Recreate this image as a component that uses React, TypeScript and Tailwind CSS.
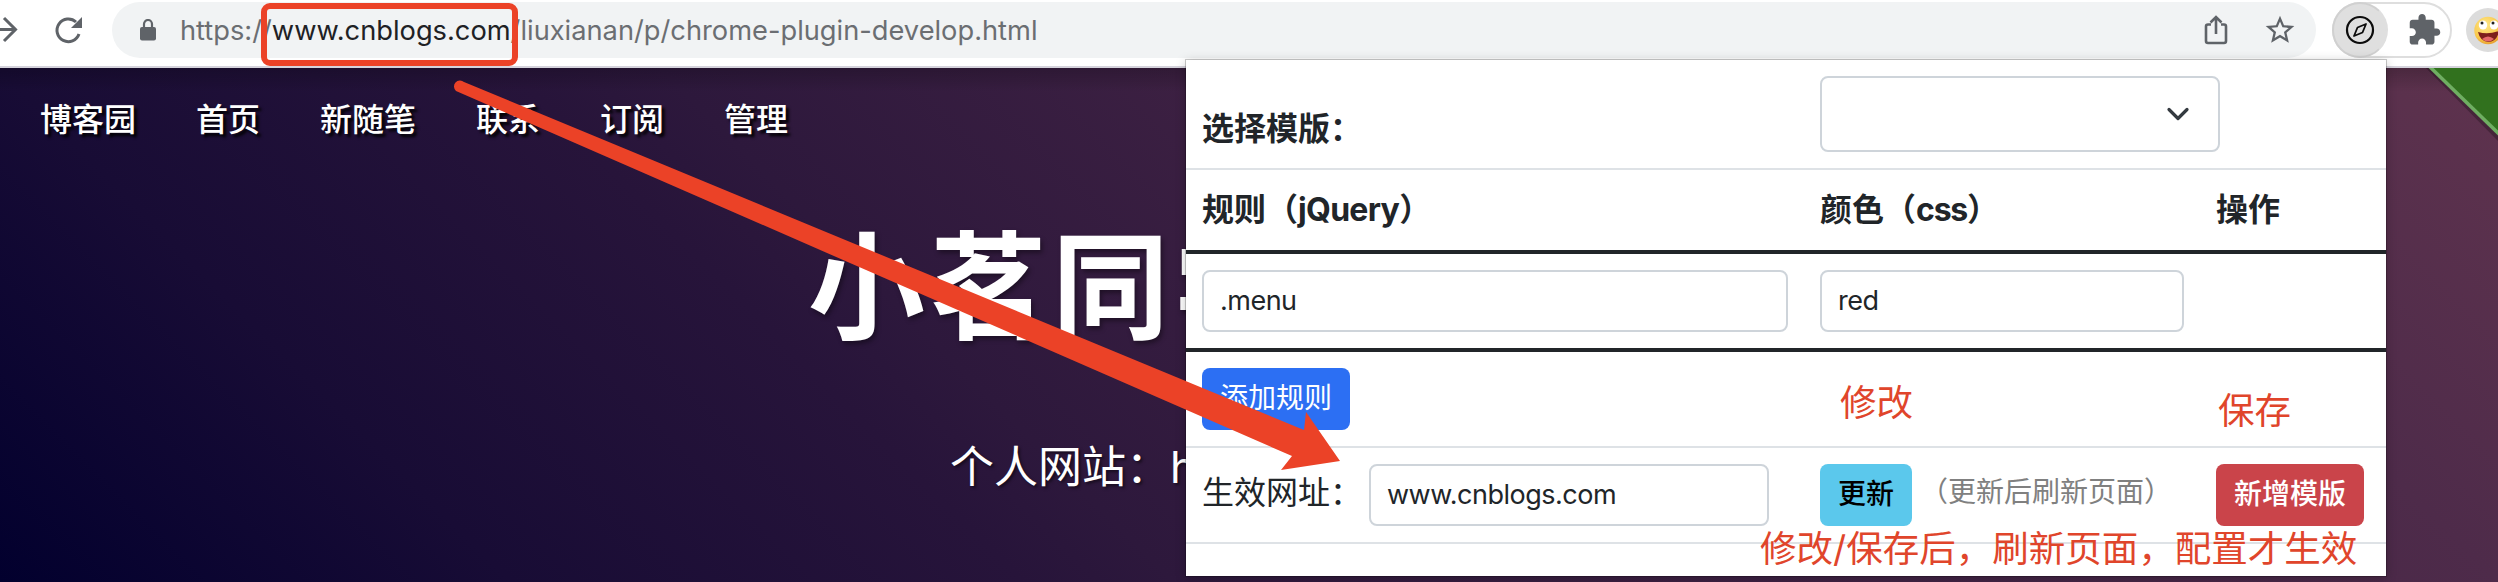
import React from "react";

const CJK = "font-['Inter','Noto_Sans_CJK_SC',sans-serif]";

function Toolbar() {
  return (
    <header className="flex h-[68px] w-full items-start border-b-2 border-[#d5d3dc] bg-white pt-[2px]">
      <div className="flex h-14 w-28 shrink-0 items-center">
        <svg width="112" height="56" viewBox="0 2 112 56" fill="none">
          <path d="M-8 29.500H15M4 18L15.500 29.500L4 41" stroke="#5f6368" strokeWidth="3" />
          <path d="M79 34A11.300 11.300 0 1 1 76 22" stroke="#5f6368" strokeWidth="3" />
          <path d="M82 17V28H71Z" fill="#5f6368" />
        </svg>
      </div>
      <div className="flex h-14 w-[2204px] shrink-0 items-center rounded-full bg-[#f1f3f4]">
        <svg className="ml-7 shrink-0" width="16" height="22" viewBox="0 0 16 22">
          <path d="M2 8h12a2 2 0 0 1 2 2v9.500a2 2 0 0 1-2 2H2a2 2 0 0 1-2-2V10a2 2 0 0 1 2-2Z" fill="#5f6368" />
          <path d="M4 9V5a4 4 0 0 1 8 0v4" fill="none" stroke="#5f6368" strokeWidth="2.200" />
        </svg>
        <div className="ml-6 w-[2024px] pt-[2px] whitespace-nowrap font-['Inter'] text-[27.250px] leading-[54px] text-[#6b6e72]">
          https://<span className="text-[#202124]">www.cnblogs.com</span>/liuxianan/p/chrome-plugin-develop.html
        </div>
        <svg className="shrink-0" width="24" height="30" viewBox="0 0 24 30" fill="none" stroke="#5f6368" strokeWidth="2.600">
          <path d="M7 9.500H4A2 2 0 0 0 2 11.500V26A2 2 0 0 0 4 28H20A2 2 0 0 0 22 26V11.500A2 2 0 0 0 20 9.500H17M12 19V3M6.500 7.500L12 2L17.500 7.500" />
        </svg>
        <svg className="ml-[37px] shrink-0" width="30" height="30" viewBox="1.500 1.500 21 21" fill="#5f6368">
          <path d="M22 9.240l-7.190-.62L12 2 9.190 8.630 2 9.240l5.460 4.730L5.820 21 12 17.270 18.180 21l-1.630-7.030L22 9.240zM12 15.400l-3.760 2.270 1-4.280-3.320-2.880 4.380-.38L12 6.100l1.710 4.040 4.380.38-3.320 2.880 1 4.280L12 15.400z" />
        </svg>
      </div>
      <div className="ml-4 flex h-14 w-[120px] shrink-0 items-center rounded-full border-2 border-[#dedede]">
        <div className="-ml-[2px] flex h-14 w-14 shrink-0 items-center justify-center rounded-full border-2 border-[#d0d0d0] border-r-[#dfdfdf] bg-[#dfdfdf]">
          <svg width="30" height="30" viewBox="0 0 30 30" fill="none" stroke="#0c0c0c" strokeWidth="2.200">
            <circle cx="15" cy="15" r="13" />
            <path d="M21 9L17.500 17.500L9 21L12.500 12.500Z" strokeLinejoin="round" strokeWidth="1.800" />
          </svg>
        </div>
        <svg className="ml-[21px] shrink-0" width="32" height="32" viewBox="1.500 1 22 22" fill="#5f6368">
          <path d="M20.500 11H19V7c0-1.100-.9-2-2-2h-4V3.500C13 2.120 11.880 1 10.500 1S8 2.120 8 3.500V5H4c-1.100 0-1.990.9-1.990 2v3.800H3.500c1.490 0 2.700 1.210 2.700 2.700s-1.210 2.700-2.700 2.700H2V20c0 1.100.9 2 2 2h3.800v-1.500c0-1.490 1.210-2.700 2.700-2.700 1.490 0 2.700 1.210 2.700 2.700V22H17c1.100 0 2-.9 2-2v-4h1.500c1.380 0 2.500-1.120 2.500-2.500S21.880 11 20.500 11z" />
        </svg>
      </div>
      <svg className="mt-[6px] ml-[14px] shrink-0" width="32" height="44" viewBox="0 0 32 44">
        <defs>
          <radialGradient id="face" cx="0.4" cy="0.3" r="0.75">
            <stop offset="0" stopColor="#ffe98a" />
            <stop offset="0.7" stopColor="#f8c648" />
            <stop offset="1" stopColor="#e59a2c" />
          </radialGradient>
        </defs>
        <circle cx="22" cy="22" r="22" fill="#dcdcdc" />
        <circle cx="22" cy="22.500" r="13.700" fill="url(#face)" />
        <ellipse cx="17" cy="17" rx="4.200" ry="4.500" fill="#fff" />
        <ellipse cx="28" cy="17" rx="4.200" ry="4.500" fill="#fff" />
        <circle cx="16" cy="15" r="1.500" fill="#222" />
        <circle cx="27" cy="15" r="1.500" fill="#222" />
        <path d="M12 24Q22 27 33 23Q31 34 22 34Q14 33 12 24Z" fill="#7d1f1c" />
        <path d="M16 31Q22 26 28 31Q22 36 16 31Z" fill="#e56a6a" />
      </svg>
    </header>
  );
}

const NAV = ["博客园", "首页", "新随笔", "联系", "订阅", "管理"];

function BlogPage() {
  return (
    <main className="relative h-[514px] w-full overflow-hidden bg-[linear-gradient(45deg,#02002e_0%,#180c35_17%,#27143a_34%,#2d183c_39%,#3c2042_56%,#4e2b4a_83%,#5f334e_100%)] text-white">
      <div className="absolute inset-x-0 top-0 h-6 bg-linear-to-b from-black/20 to-transparent" />
      <nav className="flex gap-[60px] pt-7 pl-10 text-[32px] leading-[48px] font-medium [text-shadow:3px_3px_3px_#000]">
        {NAV.map((n) => (
          <span key={n}>{n}</span>
        ))}
      </nav>
      <h1 className="mt-[84px] pl-[808px] text-[117px] leading-[120px] font-bold tracking-[5px] whitespace-nowrap [text-shadow:2px_3px_5px_rgba(0,0,0,.4)]">小茗同学</h1>
      <p className="mt-[87px] pl-[950px] text-[44px] leading-[64px] whitespace-nowrap [text-shadow:2px_2px_3px_rgba(0,0,0,.5)]">个人网站：h</p>
      <svg className="absolute top-0 right-0" width="90" height="90" viewBox="0 0 90 90">
        <path d="M19 -4L90 65V73L14 -4Z" fill="#000" opacity=".25" />
        <path d="M23 0L90 65V0Z" fill="#31711e" />
        <path d="M21 -2L92 67" stroke="#6fae62" strokeWidth="3.500" />
      </svg>
    </main>
  );
}

function Field({ value, className }: { value: string; className: string }) {
  return (
    <div className={`h-[62px] shrink-0 rounded-lg border-2 border-[#ced4da] pl-4 text-[27px] leading-[58px] tracking-[-0.5px] ${className}`}>
      {value}
    </div>
  );
}

function Popup() {
  return (
    <section className="absolute top-[60px] left-[1186px] flex h-[516px] w-[1200px] flex-col bg-white text-[32px] leading-[48px] text-[#212529] shadow-[0_0_0_1px_rgba(0,0,0,.2),0_2px_10px_rgba(0,0,0,.25)]">
      <div className="flex h-[110px] shrink-0 items-start border-b-2 border-[#dee2e6] pt-4 pl-4">
        <div className="w-[618px] pt-[29px] font-bold">选择模版：</div>
        <div className="flex h-[76px] w-[400px] items-center justify-end rounded-lg border-2 border-[#ced4da] pr-7">
          <svg width="24" height="16" viewBox="0 0 24 16" fill="none" stroke="#343a40" strokeWidth="3.200" strokeLinecap="round" strokeLinejoin="round">
            <path d="M3 3.500L12 12.500L21 3.500" />
          </svg>
        </div>
      </div>
      <div className="flex h-[84px] shrink-0 items-center border-b-4 border-[#212529] pl-4 font-bold">
        <div className="w-[618px]">规则（<span className="tracking-[-0.7px]">jQuery</span>）</div>
        <div className="w-[396px]">颜色（<span className="tracking-[-1.200px]">css</span>）</div>
        <div>操作</div>
      </div>
      <div className="flex h-[98px] shrink-0 items-start border-b-4 border-[#212529] pt-4 pl-4">
        <Field value=".menu" className="mr-8 w-[586px]" />
        <Field value="red" className="w-[364px]" />
      </div>
      <div className="flex h-24 shrink-0 items-start border-b-2 border-[#dee2e6] pt-4 pl-4">
        <div className="h-[62px] w-[148px] rounded-lg bg-[#2c6ff3] text-center text-[28px] leading-[60px] text-white">添加规则</div>
      </div>
      <div className="flex h-24 shrink-0 items-start border-b-2 border-[#dee2e6] pt-4 pl-4">
        <div className="w-[167px] pt-[5px] whitespace-nowrap">生效网址：</div>
        <Field value="www.cnblogs.com" className="mr-[51px] w-[400px]" />
        <div className="h-[62px] w-[92px] rounded-lg bg-[#5bc8ec] text-center text-[28px] leading-[60px] font-medium text-black">更新</div>
        <div className="w-[304px] pt-[4px] pl-2 text-[28px] whitespace-nowrap text-[#808080]">（更新后刷新页面）</div>
        <div className="h-[62px] w-[148px] rounded-lg bg-[#ca444a] text-center text-[28px] leading-[60px] font-medium text-white">新增模版</div>
      </div>
    </section>
  );
}

function Annotations() {
  return (
    <div className="absolute inset-0 text-[36.500px] leading-[48px] whitespace-nowrap text-[#e0452b]">
      <div className="absolute top-[3px] left-[261px] h-[63px] w-[257px] rounded-[9px] border-[6px] border-[#eb4227]" />
      <svg className="absolute inset-0" width="2498" height="582" viewBox="0 0 2498 582">
        <path d="M464 82L1304 430L1306 412L1340 461L1281 470L1292 456L456 91A5.500 5.500 0 0 1 464 82Z" fill="#eb4227" />
      </svg>
      <span className="absolute top-[379px] left-[1840px]">修改</span>
      <span className="absolute top-[387px] left-[2218px]">保存</span>
      <span className="absolute top-[525px] left-[1760px]">修改/保存后，刷新页面，配置才生效</span>
    </div>
  );
}

export default function App() {
  return (
    <div className={`relative h-[582px] w-[2498px] overflow-hidden ${CJK}`}>
      <Toolbar />
      <BlogPage />
      <Popup />
      <Annotations />
    </div>
  );
}
